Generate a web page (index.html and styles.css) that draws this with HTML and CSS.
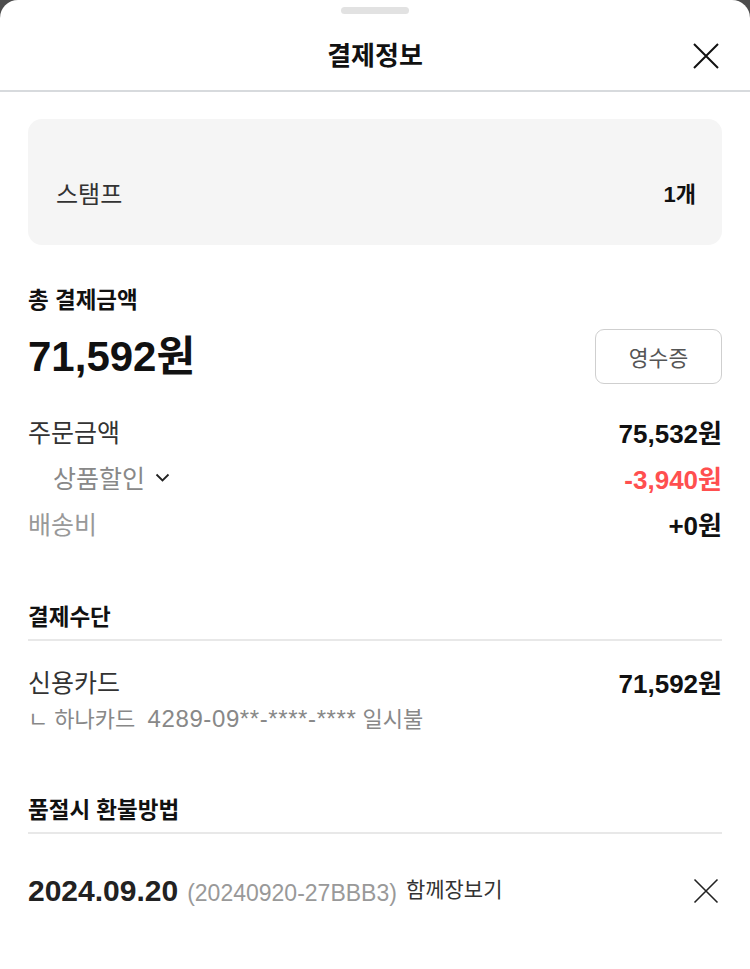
FILE: index.html
```html
<!DOCTYPE html>
<html lang="ko">
<head>
    <meta charset="UTF-8">
    <meta name="viewport" content="width=device-width, initial-scale=1.0">
    <title>결제정보</title>
    <link rel="stylesheet" href="styles.css">
</head>
<body>

    <div class="sheet">
        <div class="handle"></div>

        <div class="header">
            <h1>결제정보</h1>
            <button class="close-btn" aria-label="닫기">
                <svg width="26" height="26" viewBox="0 0 26 26">
                    <path d="M1 1 L25 25 M25 1 L1 25" stroke="#111" stroke-width="2" fill="none"/>
                </svg>
            </button>
        </div>

        <div class="content">
            <div class="stamp-box">
                <span class="stamp-label">스탬프</span>
                <span class="stamp-count">1개</span>
            </div>

            <div class="total">
                <h2 class="total-title">총 결제금액</h2>
                <div class="total-row">
                    <span class="total-amount">71,592원</span>
                    <button class="receipt-btn">영수증</button>
                </div>
            </div>

            <div class="price-rows">
                <div class="row">
                    <span class="row-label">주문금액</span>
                    <span class="row-value">75,532원</span>
                </div>
                <div class="row">
                    <span class="row-label sub">
                        상품할인
                        <svg class="chevron" width="15" height="9" viewBox="0 0 15 9">
                            <path d="M1.5 1.5 L7.5 7.5 L13.5 1.5" stroke="#222" stroke-width="1.8" fill="none"/>
                        </svg>
                    </span>
                    <span class="row-value discount">-3,940원</span>
                </div>
                <div class="row">
                    <span class="row-label light">배송비</span>
                    <span class="row-value">+0원</span>
                </div>
            </div>

            <div class="section">
                <h3 class="section-title">결제수단</h3>
                <div class="row pay-row">
                    <span class="row-label">신용카드</span>
                    <span class="row-value">71,592원</span>
                </div>
                <p class="card-info">ㄴ 하나카드&nbsp; <span class="card-no">4289-09**-****-****</span> 일시불</p>
            </div>

            <div class="section">
                <h3 class="section-title">품절시 환불방법</h3>
                <div class="order-row">
                    <div class="order-info">
                        <span class="order-date">2024.09.20</span>
                        <span class="order-no">(20240920-27BBB3)</span>
                        <span class="order-shop">함께장보기</span>
                    </div>
                    <button class="close-btn" aria-label="삭제">
                        <svg width="26" height="26" viewBox="0 0 26 26">
                            <path d="M1.5 1.5 L24.5 24.5 M24.5 1.5 L1.5 24.5" stroke="#222" stroke-width="1.6" fill="none"/>
                        </svg>
                    </button>
                </div>
            </div>
        </div>
    </div>

</body>
</html>
```

FILE: styles.css
```css
* {
    margin: 0;
    padding: 0;
    box-sizing: border-box;
}

body {
    font-family: "Liberation Sans", "Noto Sans CJK KR", sans-serif;
    background-color: #4d4d4d;
    color: #222;
}

.sheet {
    background-color: #fff;
    border-radius: 18px 18px 0 0;
    min-height: 100vh;
}

.handle {
    width: 68px;
    height: 7px;
    margin: 0 auto;
    position: relative;
    top: 7px;
    background-color: #e2e2e2;
    border-radius: 4px;
}

.header {
    height: 85px;
    padding-top: 32px;
    display: flex;
    justify-content: center;
    align-items: flex-start;
    border-bottom: 2px solid #d7dadd;
    position: relative;
}

.header h1 {
    font-size: 26px;
    line-height: 34px;
    font-weight: bold;
    color: #111;
}

.close-btn {
    background: none;
    border: none;
    cursor: pointer;
    display: flex;
}

.header .close-btn {
    position: absolute;
    right: 31px;
    top: 36px;
}

.content {
    padding: 0 28px;
}

.stamp-box {
    margin-top: 27px;
    height: 126px;
    padding: 61px 26px 0 28px;
    background-color: #f5f5f5;
    border-radius: 14px;
    display: flex;
    justify-content: space-between;
    align-items: flex-start;
}

.stamp-label {
    font-size: 24px;
    line-height: 30px;
    color: #333;
}

.stamp-count {
    font-size: 22px;
    line-height: 30px;
    font-weight: bold;
    color: #111;
}

.total {
    margin-top: 41px;
}

.total-title {
    font-size: 22.5px;
    line-height: 30px;
    font-weight: bold;
    color: #111;
}

.total-row {
    margin-top: 13px;
    display: flex;
    justify-content: space-between;
    align-items: center;
}

.total-amount {
    font-size: 42px;
    line-height: 55px;
    font-weight: bold;
    color: #111;
}

.receipt-btn {
    width: 127px;
    height: 55px;
    background-color: #fff;
    border: 1px solid #cfcfcf;
    border-radius: 9px;
    font-family: inherit;
    font-size: 21.5px;
    color: #555;
}

.price-rows {
    margin-top: 24px;
}

.row {
    display: flex;
    justify-content: space-between;
    align-items: center;
    height: 46px;
}

.row-label {
    font-size: 25px;
    color: #333;
}

.row-label.sub {
    padding-left: 25px;
    color: #888;
    display: flex;
    align-items: center;
    gap: 10px;
}

.row-label.light {
    color: #999;
}

.row-value {
    font-size: 26px;
    font-weight: bold;
    color: #111;
}

.row-value.discount {
    color: #ff4f4f;
}

.section {
    margin-top: 57px;
}

.section-title {
    font-size: 22.5px;
    line-height: 30px;
    font-weight: bold;
    color: #111;
    padding-bottom: 6px;
    border-bottom: 2px solid #e8e8e8;
}

.pay-row {
    margin-top: 17px;
}

.card-info {
    font-size: 22px;
    line-height: 30px;
    color: #888;
}

.card-no {
    font-size: 24px;
    letter-spacing: 0.6px;
}

.section + .section {
    margin-top: 61px;
}

.order-row {
    margin-top: 37px;
    height: 40px;
    display: flex;
    justify-content: space-between;
    align-items: center;
}

.order-info {
    display: flex;
    align-items: baseline;
    gap: 9px;
}

.order-date {
    font-size: 30px;
    font-weight: bold;
    color: #222;
}

.order-no {
    font-size: 23px;
    color: #999;
}

.order-shop {
    font-size: 21px;
    color: #333;
    position: relative;
    top: -4px;
}

.order-row .close-btn {
    margin-right: 3px;
}
```
